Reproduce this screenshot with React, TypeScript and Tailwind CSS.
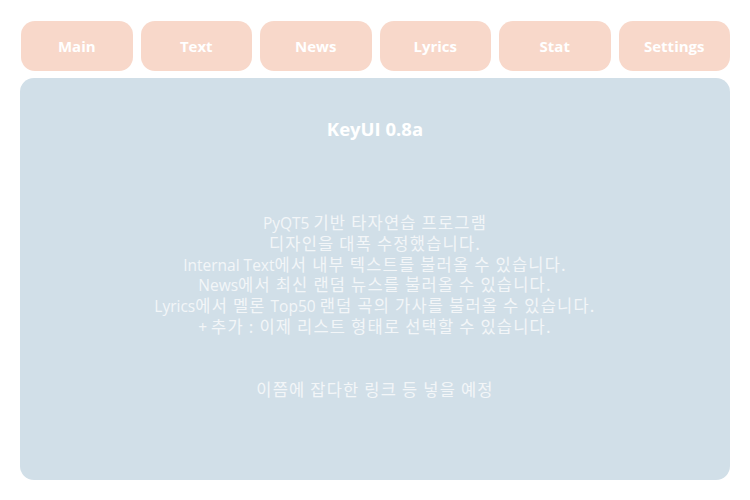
const tabs = ["Main", "Text", "News", "Lyrics", "Stat", "Settings"];

const lines = [
  "PyQT5 기반 타자연습 프로그램",
  "디자인을 대폭 수정했습니다.",
  "Internal Text에서 내부 텍스트를 불러올 수 있습니다.",
  "News에서 최신 랜덤 뉴스를 불러올 수 있습니다.",
  "Lyrics에서 멜론 Top50 랜덤 곡의 가사를 불러올 수 있습니다.",
  "+ 추가 : 이제 리스트 형태로 선택할 수 있습니다.",
];

// hangul runs get their own size + tracking so widths line up with the original fallback font
function Mixed({ text }: { text: string }) {
  const parts = text.split(/([\uAC00-\uD7A3][\uAC00-\uD7A3 .:]*)/);
  return (
    <>
      {parts.map((p, i) =>
        /[\uAC00-\uD7A3]/.test(p) ? (
          <span
            key={i}
            className="text-[16.5px] tracking-[1.2px]"
            style={{ fontFamily: '"Noto Sans CJK KR", sans-serif' }}
          >
            {p}
          </span>
        ) : (
          <span key={i}>{p}</span>
        )
      )}
    </>
  );
}

export default function App() {
  return (
    <div
      className="w-[750px] h-[500px] bg-white flex flex-col px-[20px] pt-[21px] pb-[20px] gap-[7px]"
      style={{ fontFamily: '"Open Sans", "Noto Sans CJK KR", sans-serif' }}
    >
      <div className="flex gap-[8px] pl-px">
        {tabs.map((t) => (
          <button
            key={t}
            className="w-[112px] h-[50px] rounded-[14px] bg-[#f8d8ca] text-white text-[15px] font-bold"
          >
            {t}
          </button>
        ))}
      </div>
      <div className="flex-1 rounded-[14px] bg-[#d1dfe8] flex flex-col items-center text-white">
        <h1 className="mt-[39px] text-[18.5px] font-bold leading-[24px]">KeyUI 0.8a</h1>
        <div className="mt-[71px] text-[15.5px] text-center text-[#f3f6f8]">
          {lines.map((l) => (
            <p key={l} className="h-[20.8px] leading-[20.8px] whitespace-nowrap">
              <Mixed text={l} />
            </p>
          ))}
        </div>
        <p className="mt-[42px] h-[21px] leading-[21px] text-[15.5px] text-[#f3f6f8] whitespace-nowrap">
          <Mixed text="이쯤에 잡다한 링크 등 넣을 예정" />
        </p>
      </div>
    </div>
  );
}
